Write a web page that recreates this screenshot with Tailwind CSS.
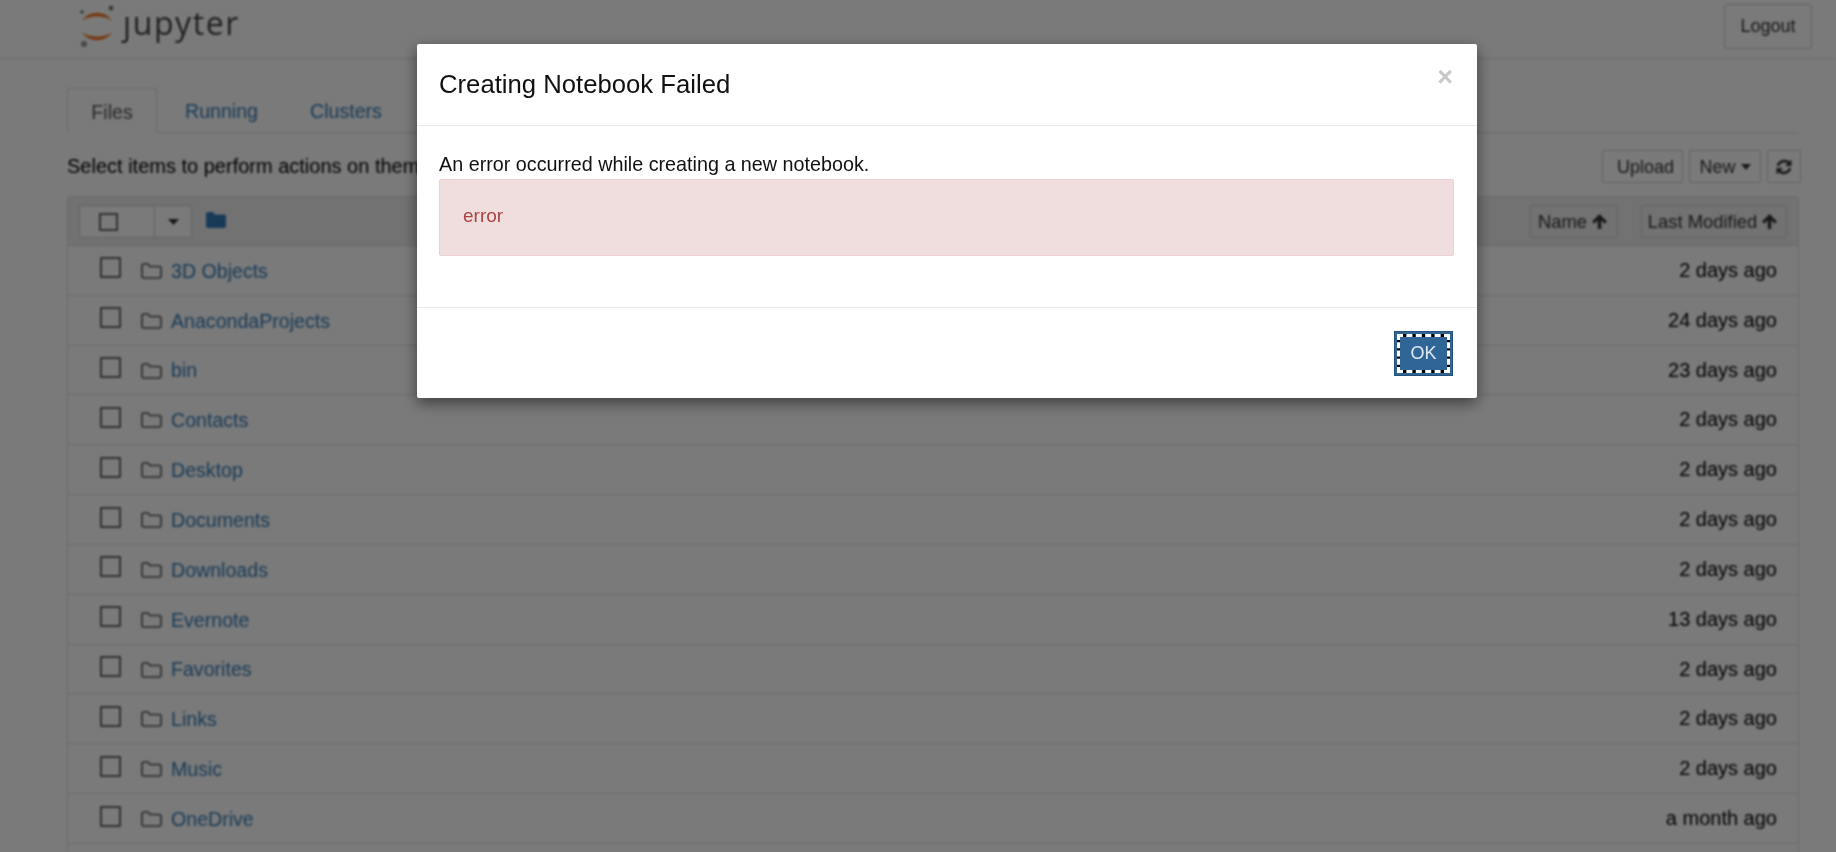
<!DOCTYPE html>
<html lang="en">
<head>
  <meta charset="UTF-8" />
  <title>Home</title>
  <script src="https://cdn.jsdelivr.net/npm/@tailwindcss/browser@4"></script>
</head>
<body class="bg-white h-[852px] overflow-hidden font-['Liberation_Sans',Arial,sans-serif] text-[19.6px] text-black">
  <!-- page behind the dialog -->
  <div class="blur-[0.8px] h-[852px] overflow-hidden">
    <header class="h-[59px] border-b border-[#e2e2e2] pl-[79px] pr-[24px] flex justify-between">
      <div class="flex items-start pt-[5px] gap-[6px]">
        <svg width="38" height="42" viewBox="0 0 38 42">
          <path d="M3 16 C9 5 27 5 33 16 C27 10 9 10 3 16Z" fill="#f37726"/>
          <path d="M3 27 C9 38 27 38 33 27 C27 33 9 33 3 27Z" fill="#f37726"/>
          <circle cx="32" cy="3" r="2.4" fill="#767677"/>
          <circle cx="3" cy="7" r="1.8" fill="#767677"/>
          <circle cx="5" cy="39" r="3" fill="#989798"/>
        </svg>
        <span class="font-['Open_Sans',sans-serif] text-[32px] leading-[36px] tracking-[1.6px] text-[#444]">ȷupyter</span>
      </div>
      <button class="mt-[4px] w-[88px] h-[45px] border border-[#ccc] rounded-[3px] text-[#333] text-[18px]">Logout</button>
    </header>

    <main class="mx-[67px] w-[1732px]">
      <nav class="mt-[29px] h-[45px] border-b border-[#ddd] flex items-stretch text-[#337ab7] text-[19.6px]">
        <a class="w-[90px] h-[45px] border border-[#ddd] border-b-0 rounded-t-[3px] bg-white text-[#555] flex items-center justify-center pt-[3px]">Files</a>
        <a class="ml-[28px] flex items-center pt-[3px]">Running</a>
        <a class="ml-[52px] flex items-center pt-[3px]">Clusters</a>
      </nav>

      <div class="relative h-[63px] flex items-start justify-between">
        <span class="mt-[22px] leading-[22px] text-[20px]">Select items to perform actions on them.</span>
        <div class="mt-[17px] -mr-[2px] flex gap-[6px] text-[18px] text-[#333]">
          <button class="w-[81px] h-[33px] border border-[#ccc] rounded-[2px] pl-[6px] pt-[1px]">Upload</button>
          <button class="w-[72px] h-[33px] border border-[#ccc] rounded-[2px] flex items-center justify-center gap-[5px] pt-[1px]">New
            <svg width="10" height="6" viewBox="0 0 10 6"><path d="M0 0H10L5 6Z" fill="#333"/></svg>
          </button>
          <button class="w-[34px] h-[33px] border border-[#ccc] rounded-[2px] flex items-center justify-center">
            <svg width="18" height="18" viewBox="0 0 18 18" fill="none" stroke="#333" stroke-width="2.6">
              <path d="M3 8 C4 3 11 1 15 6"/><path d="M15 10 C14 15 7 17 3 12"/>
              <path d="M16.5 1.5V8H10Z" fill="#333" stroke="none"/><path d="M1.5 16.5V10H8Z" fill="#333" stroke="none"/>
            </svg>
          </button>
        </div>
      </div>

      <section class="border border-[#ddd] rounded-t-[3px]" >
        <div class="h-[49px] bg-[#eeeeee] border-b border-[#ddd] flex items-start pt-[8px] pl-[11px] pr-[11px]">
          <div class="w-[113px] h-[33px] border border-[#ccc] bg-white rounded-[2px] flex">
            <div class="w-[75px] border-r border-[#ccc] pl-[19px] pt-[7px]">
              <div class="w-[19px] h-[18px] border-2 border-[#666]"></div>
            </div>
            <div class="flex-1 flex items-center justify-center">
              <svg width="11" height="6" viewBox="0 0 11 6"><path d="M0 0H11L5.5 6Z" fill="#333"/></svg>
            </div>
          </div>
          <svg class="ml-[14px] mt-[7px]" width="20" height="16" viewBox="0 0 20 16"><path d="M0 2 Q0 0 2 0H7L9 2.5H18 Q20 2.5 20 4.5V14 Q20 16 18 16H2 Q0 16 0 14Z" fill="#337ab7"/></svg>
          <div class="ml-auto flex gap-[23px] text-[18.4px] text-[#333]">
            <button class="w-[88px] h-[33px] border border-[#ccc] rounded-[2px] flex items-center justify-center gap-[4px] pr-[2px]">Name
              <svg width="17" height="17" viewBox="0 0 16 16"><path d="M8 1 L15 8 L13 10 L9.6 6.8V15H6.4V6.8L3 10L1 8Z" fill="#333"/></svg>
            </button>
            <button class="w-[146px] h-[33px] border border-[#ccc] rounded-[2px] flex items-center justify-center gap-[4px] pr-[2px]">Last Modified
              <svg width="17" height="17" viewBox="0 0 16 16"><path d="M8 1 L15 8 L13 10 L9.6 6.8V15H6.4V6.8L3 10L1 8Z" fill="#333"/></svg>
            </button>
          </div>
        </div>
        <div id="rows"></div>
      </section>
    </main>
  </div>

  <!-- backdrop -->
  <div class="fixed inset-0 bg-black/[0.52]"></div>

  <!-- dialog -->
  <div class="fixed left-[417px] top-[44px] w-[1060px] h-[354px] bg-white rounded-[2px] shadow-[0_5px_15px_rgba(0,0,0,0.5)] flex flex-col blur-[0.5px]">
    <div class="h-[82px] border-b border-[#e8e8e8] pl-[22px] pr-[24px] flex items-start justify-between">
      <h4 class="mt-[23px] text-[25.7px] leading-[34px] text-[#111]">Creating Notebook Failed</h4>
      <span class="mt-[18px] text-[27px] leading-[30px] font-bold text-[#c8c8c8]">×</span>
    </div>
    <div class="h-[182px] border-b border-[#e8e8e8] px-[22px] pt-[27px]">
      <p class="leading-[22px] text-[19.75px] text-[#111]">An error occurred while creating a new notebook.</p>
      <div class="mt-[4px] h-[77px] w-[1015px] bg-[#f0dede] border border-[#ecd0d3] rounded-[2px] pl-[23px] pb-[3px] flex items-center text-[#a94442] text-[19px]">error</div>
    </div>
    <div class="flex-1 flex justify-end pt-[23px] pr-[24px]">
      <button class="relative w-[59px] h-[45px] bg-[#2f6597] border border-[#24507a] text-[#dfe8f0] text-[18px]">
        <span class="absolute inset-[2px] border-[3px] border-black"></span>
        <span class="absolute inset-[2px] border-[3px] border-dashed border-white flex items-center justify-center">OK</span>
      </button>
    </div>
  </div>

  <script>
    // folder listing
    var items = [
      ["3D Objects", "2 days ago"], ["AnacondaProjects", "24 days ago"], ["bin", "23 days ago"],
      ["Contacts", "2 days ago"], ["Desktop", "2 days ago"], ["Documents", "2 days ago"],
      ["Downloads", "2 days ago"], ["Evernote", "13 days ago"], ["Favorites", "2 days ago"],
      ["Links", "2 days ago"], ["Music", "2 days ago"], ["OneDrive", "a month ago"], ["", ""]
    ];
    document.getElementById("rows").innerHTML = items.map(function (it) {
      if (!it[0]) return '<div class="h-[8px]"></div>';
      return `<div class="h-[49.83px] border-b border-[#ddd] flex items-center pl-[32px] pr-[21px]">
        <div class="w-[21px] h-[21px] border-2 border-[#666] rounded-[1px] -mt-[5px] shrink-0"></div>
        <svg class="ml-[20px] mt-[1px] shrink-0" width="21" height="16" viewBox="0 0 21 16" fill="none" stroke="#555" stroke-width="1.6"><path d="M1 3 Q1 1 3 1H7L9 3.5H18 Q20 3.5 20 5.5V13 Q20 15 18 15H3 Q1 15 1 13Z"/></svg>
        <a class="ml-[9px] pt-[2px] text-[#337ab7]">${it[0]}</a>
        <span class="ml-auto -mt-[1px] text-[20px]">${it[1]}</span>
      </div>`;
    }).join("");
  </script>
</body>
</html>
